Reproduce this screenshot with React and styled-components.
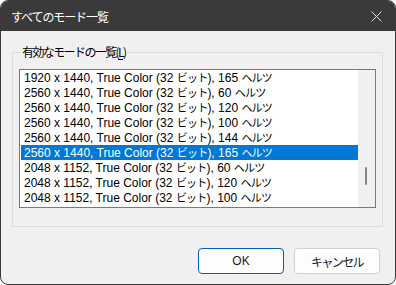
import React from "react";
import styled, { createGlobalStyle } from "styled-components";

const Global = createGlobalStyle`
  html, body { margin: 0; padding: 0; background: #ffffff; }
  body { font-family: "Segoe UI", "Liberation Sans", "Noto Sans CJK JP", sans-serif; }
`;

const Window = styled.div`
  width: 396px;
  height: 285px;
  box-sizing: border-box;
  border: 1px solid #3a3a3a;
  border-radius: 8px;
  overflow: hidden;
  background: #f0f0f0;
  display: flex;
  flex-direction: column;
`;

const TitleBar = styled.div`
  height: 30px;
  flex: none;
  background: #3a3a3a;
  display: flex;
  align-items: center;
  justify-content: space-between;
  padding-left: 10px;
  padding-right: 9px;
`;

const Title = styled.div`
  color: #ffffff;
  font-family: "Noto Sans CJK JP", sans-serif;
  font-size: 12px;
  letter-spacing: -1.1px;
  line-height: 1;
  padding-top: 1px;
`;

const CloseButton = styled.div`
  width: 20px;
  height: 20px;
  display: flex;
  align-items: center;
  justify-content: center;
`;

const Body = styled.div`
  flex: 1;
  display: flex;
  flex-direction: column;
  padding: 21px 12px 0 11px;
`;

const Group = styled.div`
  position: relative;
  border: 1px solid #dcdcdc;
  height: 175px;
  box-sizing: border-box;
  padding: 16px 6px 18px 6px;
`;

const Legend = styled.div`
  position: absolute;
  left: 7px;
  top: -8px;
  padding: 0 2px;
  background: #f0f0f0;
  font-family: "Noto Sans CJK JP", sans-serif;
  font-size: 12px;
  color: #000;
  letter-spacing: -1.6px;
  line-height: 14px;
`;

const Underline = styled.span`
  text-decoration: underline;
  text-underline-offset: 2px;
`;

const ListBox = styled.div`
  border: 1px solid #7a7a7a;
  background: #ffffff;
  height: 139px;
  box-sizing: border-box;
  display: flex;
  padding-left: 1px;
`;

const Rows = styled.div`
  flex: 1;
  display: flex;
  flex-direction: column;
`;

const Row = styled.div`
  height: 15px;
  line-height: 15px;
  padding-left: 3px;
  font-size: 12px;
  white-space: nowrap;
  overflow: hidden;
  background: ${(p) => (p.$selected ? "#0078d7" : "transparent")};
  color: ${(p) => (p.$selected ? "#ffffff" : "#000000")};
`;

const Jp = styled.span`
  font-family: "Noto Sans CJK JP", sans-serif;
  font-size: 11px;
  letter-spacing: -0.8px;
`;

const ScrollTrack = styled.div`
  width: 17px;
  flex: none;
  background: #f0f0f0;
  position: relative;
`;

const Thumb = styled.div`
  position: absolute;
  left: 7px;
  top: 97px;
  width: 2px;
  height: 18px;
  background: #858585;
  border-radius: 1px;
`;

const Footer = styled.div`
  display: flex;
  justify-content: flex-end;
  gap: 10px;
  padding: 21px 3px 0 0;
`;

const Button = styled.button`
  width: 86px;
  height: 26px;
  box-sizing: border-box;
  border-radius: 4px;
  border: 1px solid ${(p) => (p.$primary ? "#005fb8" : "#d0d0d0")};
  background: #fdfdfd;
  font-family: "Segoe UI", "Liberation Sans", "Noto Sans CJK JP", sans-serif;
  font-size: 12px;
  color: #1a1a1a;
  padding: 0;
`;

const ButtonJp = styled.span`
  font-family: "Noto Sans CJK JP", sans-serif;
  font-size: 12px;
  letter-spacing: -1.6px;
`;

const modes = [
  ["1920 x 1440", "165"],
  ["2560 x 1440", "60"],
  ["2560 x 1440", "120"],
  ["2560 x 1440", "100"],
  ["2560 x 1440", "144"],
  ["2560 x 1440", "165"],
  ["2048 x 1152", "60"],
  ["2048 x 1152", "120"],
  ["2048 x 1152", "100"],
];

export default function App() {
  return (
    <>
      <Global />
      <Window>
        <TitleBar>
          <Title>すべてのモード一覧</Title>
          <CloseButton>
            <svg width="11" height="11" viewBox="0 0 11 11">
              <path d="M0.5 0.5 L10.5 10.5 M10.5 0.5 L0.5 10.5" stroke="#e8e8e8" strokeWidth="1" fill="none" />
            </svg>
          </CloseButton>
        </TitleBar>
        <Body>
          <Group>
            <Legend>
              有効なモードの一覧(<Underline>L</Underline>)
            </Legend>
            <ListBox>
              <Rows>
                {modes.map(([res, hz], i) => (
                  <Row key={i} $selected={i === 5}>
                    {res}, True Color (32 <Jp>ビット</Jp>), {hz} <Jp>ヘルツ</Jp>
                  </Row>
                ))}
              </Rows>
              <ScrollTrack>
                <Thumb />
              </ScrollTrack>
            </ListBox>
          </Group>
          <Footer>
            <Button $primary>OK</Button>
            <Button>
              <ButtonJp>キャンセル</ButtonJp>
            </Button>
          </Footer>
        </Body>
      </Window>
    </>
  );
}
